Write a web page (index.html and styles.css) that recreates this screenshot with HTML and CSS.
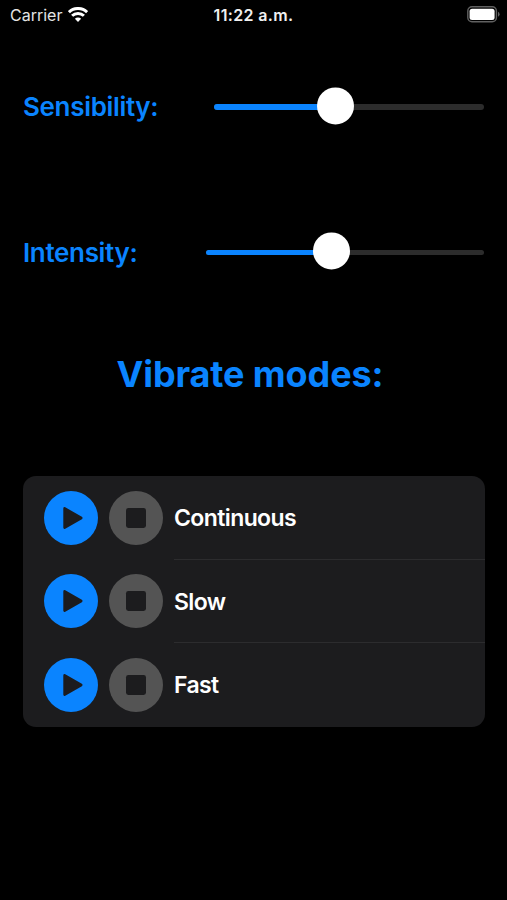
FILE: index.html
```html
<!DOCTYPE html>
<html lang="en">
<head>
<meta charset="utf-8">
<title>Vibrate modes</title>
<link rel="stylesheet" href="styles.css">
</head>
<body>
<svg class="symbols" aria-hidden="true">
  <symbol id="play" viewBox="0 0 54 54">
    <circle cx="27" cy="27" r="27" fill="#0a84ff"/>
    <path d="M20.6 17.4 L37.2 27 L20.6 36.6 Z" fill="#1c1c1e" stroke="#1c1c1e" stroke-width="2.6" stroke-linejoin="round"/>
  </symbol>
  <symbol id="stop" viewBox="0 0 54 54">
    <circle cx="27" cy="27" r="27" fill="#545454"/>
    <rect x="17" y="17" width="20" height="20" rx="2.4" fill="#1c1c1e"/>
  </symbol>
</svg>
<header class="status">
  <div class="carrier">
    <span class="carrier-name">Carrier</span>
    <svg class="wifi" viewBox="0 0 20 15" width="20" height="15">
      <g fill="none" stroke="#fff" stroke-width="3">
        <path d="M.9 5.2A13 13 0 0 1 19.1 5.2"/>
        <path d="M4.1 8.8A8.4 8.4 0 0 1 15.9 8.8"/>
      </g>
      <path d="M10 14.9L6.9 11.7A4.4 4.4 0 0 1 13.1 11.7Z" fill="#fff"/>
    </svg>
  </div>
  <time class="clock">11:22 a.m.</time>
  <svg class="battery" viewBox="0 0 33 17" width="33" height="17">
    <rect x=".8" y=".8" width="28.6" height="15" rx="4.2" fill="none" stroke="#606060" stroke-width="1.4"/>
    <rect x="2.6" y="2.7" width="25" height="11.2" rx="2.5" fill="#fff"/>
    <path d="M31 5.8Q32.6 6.4 32.6 8.3T31 10.8Z" fill="#606060"/>
  </svg>
</header>
<main>
  <section class="control sensibility">
    <span class="label">Sensibility:</span>
    <div class="slider"><div class="fill"></div><div class="thumb"></div></div>
  </section>
  <section class="control intensity">
    <span class="label">Intensity:</span>
    <div class="slider"><div class="fill"></div><div class="thumb"></div></div>
  </section>
  <h1>Vibrate modes:</h1>
  <ul class="modes">
    <li><svg class="button"><use href="#play"/></svg><svg class="button"><use href="#stop"/></svg><div class="name">Continuous</div></li>
    <li><svg class="button"><use href="#play"/></svg><svg class="button"><use href="#stop"/></svg><div class="name">Slow</div></li>
    <li><svg class="button"><use href="#play"/></svg><svg class="button"><use href="#stop"/></svg><div class="name">Fast</div></li>
  </ul>
</main>
</body>
</html>
```
FILE: styles.css
```css
* { box-sizing: border-box; }
body {
  margin: 0;
  height: 900px;
  overflow: hidden;
  background: #000;
  color: #fff;
  font-family: Inter, "Liberation Sans", sans-serif;
}
.symbols { display: none; }
.status {
  display: grid;
  grid-template-columns: 1fr auto 1fr;
  height: 30px;
  padding: 0 7px 0 10px;
  line-height: 30px;
}
.carrier { display: flex; align-items: flex-start; gap: 6px; }
.carrier-name { font-size: 16px; color: #e4e4e4; }
.wifi { margin-top: 7px; }
.clock { margin-left: -3px; font-size: 16px; font-weight: 600; color: #f0f0f0; letter-spacing: 0.35px; }
.battery { justify-self: end; margin-top: 6px; }
.control {
  display: flex;
  align-items: center;
  justify-content: space-between;
  height: 40px;
  padding: 0 23px;
}
.sensibility { margin-top: 57px; }
.intensity { margin-top: 105.5px; }
.label {
  font-size: 26px;
  font-weight: 600;
  line-height: 40px;
  letter-spacing: -0.33px;
  color: #0a84ff;
  white-space: nowrap;
}
.slider {
  display: flex;
  align-items: center;
  height: 5.5px;
  border-radius: 3px;
  background: #2c2c2c;
}
.sensibility .slider { width: 270.5px; }
.intensity .slider { width: 278.5px; }
.fill { height: 100%; border-radius: 3px 0 0 3px; background: #0a84ff; }
.sensibility .fill { width: 115px; }
.intensity .fill { width: 119px; }
.thumb {
  width: 37px;
  height: 37px;
  margin: -1.8px 0 0 -12px;
  border-radius: 50%;
  background: #fff;
  transform: translateY(-0.6px);
}
h1 {
  margin: 76.5px 7px 0 0;
  font-size: 36px;
  font-weight: 700;
  line-height: 50px;
  letter-spacing: -0.1px;
  text-align: center;
  color: #0a84ff;
}
.modes {
  margin: 77px 22px 0 22.5px;
  padding: 0;
  height: 250.5px;
  border-radius: 13px;
  background: #1c1c1e;
  list-style: none;
  overflow: hidden;
}
.modes li { display: flex; align-items: center; height: 83.5px; padding-left: 21.5px; }
.button { width: 54px; height: 54px; margin-right: 11px; }
.name {
  flex: 1;
  height: 100%;
  line-height: 84px;
  font-size: 23px;
  font-weight: 600;
  letter-spacing: -0.6px;
  border-bottom: 1.5px solid #2c2c2e;
}
li:last-child .name { border-bottom: 0; }
```
